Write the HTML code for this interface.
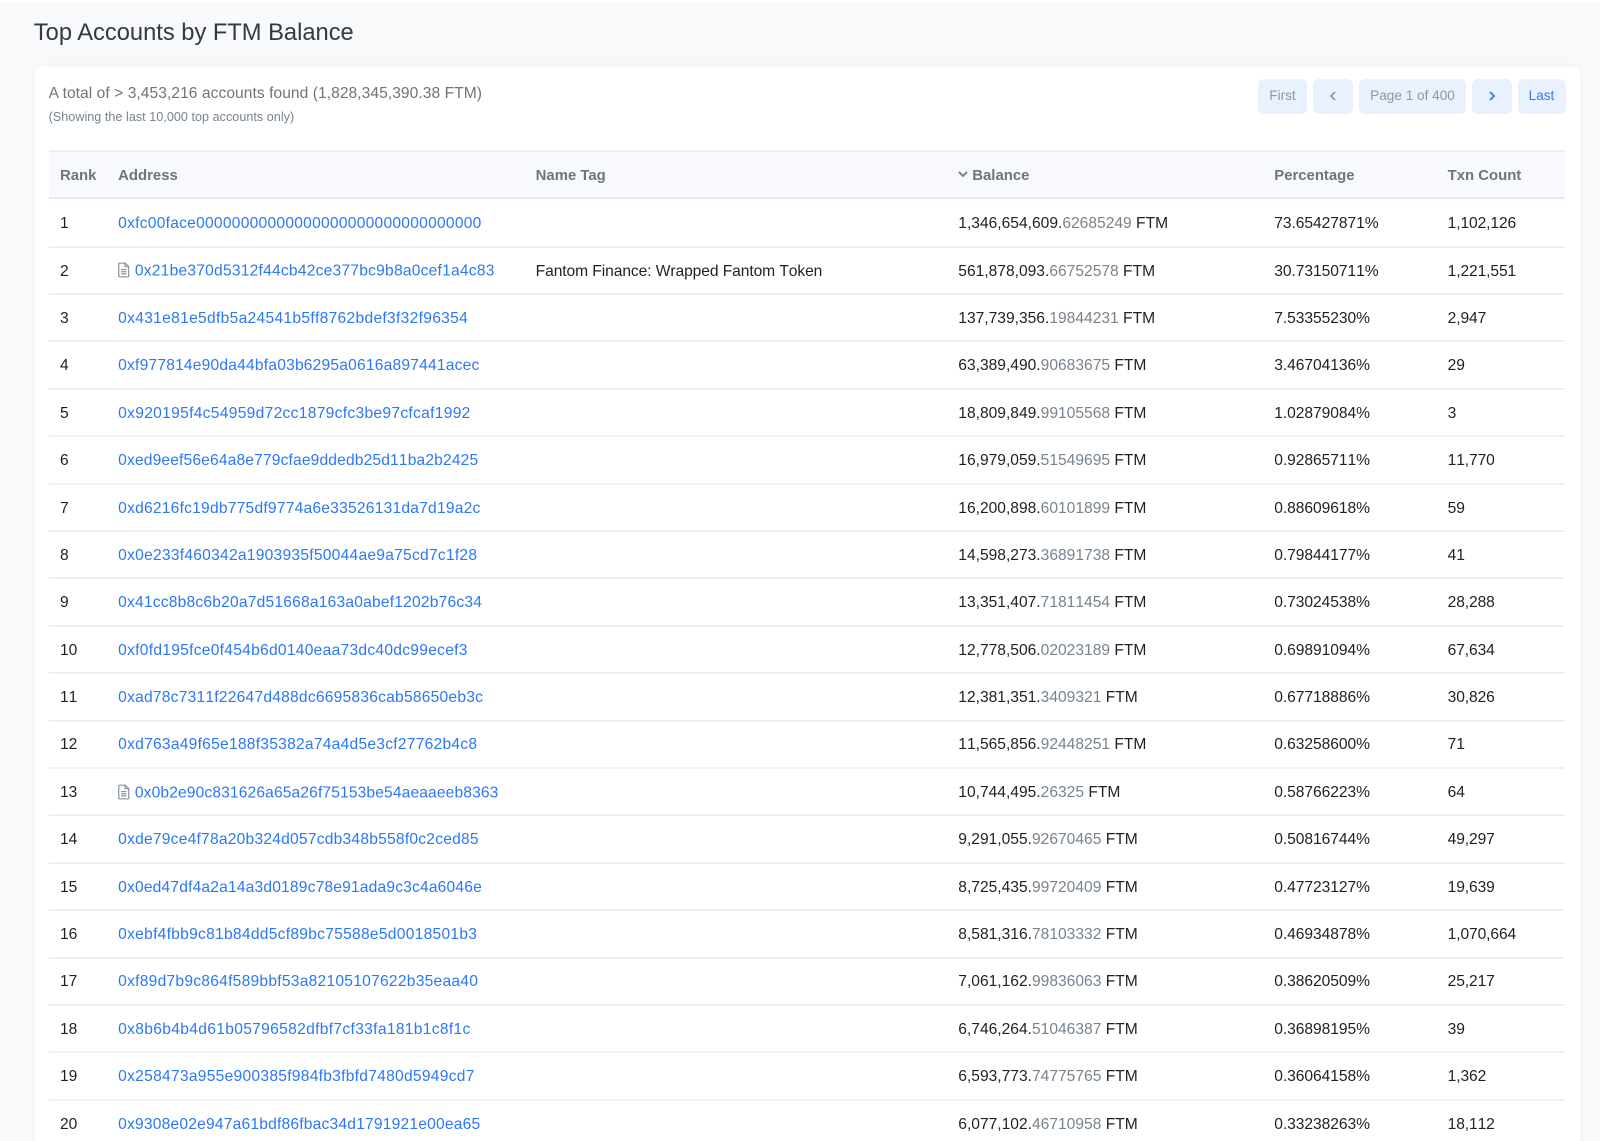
<!DOCTYPE html>
<html lang="en">
<head>
<meta charset="utf-8">
<title>Top Accounts by FTM Balance</title>
<style>
html,body{margin:0;padding:0;width:1600px;height:1141px;overflow:hidden;background:#f8f9fb;}
body{font-family:"Liberation Sans",Arial,sans-serif;color:#1e2022;position:relative;}
#w{position:absolute;left:0;top:0;width:1600px;height:1141px;overflow:hidden;filter:blur(.3px);}
.top{position:absolute;left:0;top:0;width:1600px;height:2px;background:#fff;}
h1{position:absolute;left:33.8px;top:18.5px;margin:0;font-size:23.7px;line-height:29px;font-weight:400;color:#343a40;white-space:nowrap;}
.card{position:absolute;left:34.6px;top:65.7px;width:1545.4px;height:1100px;background:#fff;border-radius:8px;box-shadow:0 0 8px rgba(180,190,210,.12);}
.l1{position:absolute;left:48.6px;top:83.5px;font-size:15.6px;line-height:19px;letter-spacing:.05px;color:#6c757d;white-space:nowrap;}
.l2{position:absolute;left:48.6px;top:108.5px;font-size:12.6px;line-height:16px;letter-spacing:.03px;color:#77838f;white-space:nowrap;}
.btn{position:absolute;top:79px;height:34.5px;line-height:34.5px;background:#e9f0fe;border-radius:6px;text-align:center;font-size:13.6px;color:#8c98a4;}
.btn.on{color:#3778f6;}
.btn svg{display:block;position:absolute;left:50%;top:50%;margin:-6px 0 0 -5px;}
.t{position:absolute;left:48.6px;top:150px;width:1516.8px;font-size:15.6px;font-kerning:none;}
.r{display:grid;grid-template-columns:58.2px 417.5px 422.6px 316px 173.4px 129.1px;box-sizing:border-box;height:47.4px;border-bottom:2px solid #eef0f6;align-items:center;}
.r>div{padding-left:11.4px;white-space:nowrap;position:relative;top:1.2px;}
.r.f{height:49.2px;padding-top:1.8px;}
.r>div:nth-child(3){letter-spacing:-.08px;}
.r>div:nth-child(5){letter-spacing:-.05px;}
.r>div:nth-child(6){letter-spacing:-.1px;}
.h{height:48.5px;background:#f8f9fd;border-top:2px solid #eceef5;border-bottom:2px solid #e7eaf3;font-weight:700;color:#6c757d;font-size:14.9px;font-kerning:auto;}
.h>div{top:1.6px;letter-spacing:0 !important;}
a{color:#2a78f6;text-decoration:none;}
.g{color:#77838f;}
.d{display:inline-block;width:11.5px;height:16px;margin-right:5.2px;vertical-align:-2.5px;}
</style>
</head>
<body>
<div id="w">
<div class="top"></div>
<h1>Top Accounts by FTM Balance</h1>
<div class="card"></div>
<div class="l1">A total of &gt; 3,453,216 accounts found (1,828,345,390.38 FTM)</div>
<div class="l2">(Showing the last 10,000 top accounts only)</div>
<div class="btn" style="left:1258px;width:49px">First</div>
<div class="btn" style="left:1313px;width:40px"><svg width="10" height="12" viewBox="0 0 10 12"><path d="M7 2L3 6l4 4" fill="none" stroke="#8c98a4" stroke-width="1.8"/></svg></div>
<div class="btn" style="left:1359px;width:107px">Page 1 of 400</div>
<div class="btn on" style="left:1472px;width:40px"><svg width="10" height="12" viewBox="0 0 10 12"><path d="M3 2l4 4-4 4" fill="none" stroke="#3778f6" stroke-width="1.8"/></svg></div>
<div class="btn on" style="left:1517.5px;width:48px">Last</div>

<svg width="0" height="0" style="position:absolute"><defs><symbol id="doc" viewBox="0 0 12 16"><path d="M1.8 .8H7.6L11.2 4.4V14a1.2 1.2 0 0 1-1.2 1.2H2A1.2 1.2 0 0 1 .8 14V2A1.2 1.2 0 0 1 1.8 .8Z M7.4 .8V4.6H11.2 M3.2 7.6H8.8 M3.2 9.8H8.8 M3.2 12H8.8" fill="none" stroke="#77838f" stroke-width="1.1"/></symbol></defs></svg>

<div class="t">
<div class="r h"><div>Rank</div><div>Address</div><div>Name Tag</div><div><svg width="10" height="7" viewBox="0 0 10 7" style="margin-right:4px;vertical-align:2px"><path d="M1 1l4 4 4-4" fill="none" stroke="#77838f" stroke-width="2"/></svg>Balance</div><div>Percentage</div><div>Txn Count</div></div>
<div class="r f"><div>1</div><div><a href="#" style="letter-spacing:.25px">0xfc00face00000000000000000000000000000000</a></div><div></div><div>1,346,654,609.<span class="g">62685249</span> FTM</div><div>73.65427871%</div><div>1,102,126</div></div>
<div class="r"><div>2</div><div><svg class="d"><use href="#doc"/></svg><a href="#" style="letter-spacing:.225px">0x21be370d5312f44cb42ce377bc9b8a0cef1a4c83</a></div><div>Fantom Finance: Wrapped Fantom Token</div><div>561,878,093.<span class="g">66752578</span> FTM</div><div>30.73150711%</div><div>1,221,551</div></div>
<div class="r"><div>3</div><div><a href="#" style="letter-spacing:.3px">0x431e81e5dfb5a24541b5ff8762bdef3f32f96354</a></div><div></div><div>137,739,356.<span class="g">19844231</span> FTM</div><div>7.53355230%</div><div>2,947</div></div>
<div class="r"><div>4</div><div><a href="#" style="letter-spacing:.2px">0xf977814e90da44bfa03b6295a0616a897441acec</a></div><div></div><div>63,389,490.<span class="g">90683675</span> FTM</div><div>3.46704136%</div><div>29</div></div>
<div class="r"><div>5</div><div><a href="#" style="letter-spacing:.3px">0x920195f4c54959d72cc1879cfc3be97cfcaf1992</a></div><div></div><div>18,809,849.<span class="g">99105568</span> FTM</div><div>1.02879084%</div><div>3</div></div>
<div class="r"><div>6</div><div><a href="#" style="letter-spacing:.15px">0xed9eef56e64a8e779cfae9ddedb25d11ba2b2425</a></div><div></div><div>16,979,059.<span class="g">51549695</span> FTM</div><div>0.92865711%</div><div>11,770</div></div>
<div class="r"><div>7</div><div><a href="#" style="letter-spacing:.225px">0xd6216fc19db775df9774a6e33526131da7d19a2c</a></div><div></div><div>16,200,898.<span class="g">60101899</span> FTM</div><div>0.88609618%</div><div>59</div></div>
<div class="r"><div>8</div><div><a href="#" style="letter-spacing:.25px">0x0e233f460342a1903935f50044ae9a75cd7c1f28</a></div><div></div><div>14,598,273.<span class="g">36891738</span> FTM</div><div>0.79844177%</div><div>41</div></div>
<div class="r"><div>9</div><div><a href="#" style="letter-spacing:.2px">0x41cc8b8c6b20a7d51668a163a0abef1202b76c34</a></div><div></div><div>13,351,407.<span class="g">71811454</span> FTM</div><div>0.73024538%</div><div>28,288</div></div>
<div class="r"><div>10</div><div><a href="#" style="letter-spacing:.27px">0xf0fd195fce0f454b6d0140eaa73dc40dc99ecef3</a></div><div></div><div>12,778,506.<span class="g">02023189</span> FTM</div><div>0.69891094%</div><div>67,634</div></div>
<div class="r"><div>11</div><div><a href="#" style="letter-spacing:.225px">0xad78c7311f22647d488dc6695836cab58650eb3c</a></div><div></div><div>12,381,351.<span class="g">3409321</span> FTM</div><div>0.67718886%</div><div>30,826</div></div>
<div class="r"><div>12</div><div><a href="#" style="letter-spacing:.25px">0xd763a49f65e188f35382a74a4d5e3cf27762b4c8</a></div><div></div><div>11,565,856.<span class="g">92448251</span> FTM</div><div>0.63258600%</div><div>71</div></div>
<div class="r"><div>13</div><div><svg class="d"><use href="#doc"/></svg><a href="#" style="letter-spacing:.13px">0x0b2e90c831626a65a26f75153be54aeaaeeb8363</a></div><div></div><div>10,744,495.<span class="g">26325</span> FTM</div><div>0.58766223%</div><div>64</div></div>
<div class="r"><div>14</div><div><a href="#" style="letter-spacing:.225px">0xde79ce4f78a20b324d057cdb348b558f0c2ced85</a></div><div></div><div>9,291,055.<span class="g">92670465</span> FTM</div><div>0.50816744%</div><div>49,297</div></div>
<div class="r"><div>15</div><div><a href="#" style="letter-spacing:.175px">0x0ed47df4a2a14a3d0189c78e91ada9c3c4a6046e</a></div><div></div><div>8,725,435.<span class="g">99720409</span> FTM</div><div>0.47723127%</div><div>19,639</div></div>
<div class="r"><div>16</div><div><a href="#" style="letter-spacing:.27px">0xebf4fbb9c81b84dd5cf89bc75588e5d0018501b3</a></div><div></div><div>8,581,316.<span class="g">78103332</span> FTM</div><div>0.46934878%</div><div>1,070,664</div></div>
<div class="r"><div>17</div><div><a href="#" style="letter-spacing:.25px">0xf89d7b9c864f589bbf53a82105107622b35eaa40</a></div><div></div><div>7,061,162.<span class="g">99836063</span> FTM</div><div>0.38620509%</div><div>25,217</div></div>
<div class="r"><div>18</div><div><a href="#" style="letter-spacing:.32px">0x8b6b4b4d61b05796582dfbf7cf33fa181b1c8f1c</a></div><div></div><div>6,746,264.<span class="g">51046387</span> FTM</div><div>0.36898195%</div><div>39</div></div>
<div class="r"><div>19</div><div><a href="#" style="letter-spacing:.27px">0x258473a955e900385f984fb3fbfd7480d5949cd7</a></div><div></div><div>6,593,773.<span class="g">74775765</span> FTM</div><div>0.36064158%</div><div>1,362</div></div>
<div class="r"><div>20</div><div><a href="#" style="letter-spacing:.2px">0x9308e02e947a61bdf86fbac34d1791921e00ea65</a></div><div></div><div>6,077,102.<span class="g">46710958</span> FTM</div><div>0.33238263%</div><div>18,112</div></div>
</div>
</div>
</body>
</html>
